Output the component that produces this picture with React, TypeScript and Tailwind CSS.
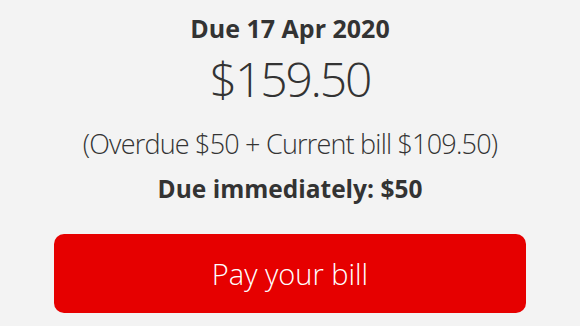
import React from "react";

export default function App() {
  return (
    <div
      className="w-[580px] h-[326px] bg-[#f3f3f3] flex flex-col items-center text-[#333333] overflow-hidden"
      style={{ fontFamily: '"Open Sans", "Liberation Sans", sans-serif' }}
    >
      <div className="mt-[13px] text-[25px] leading-[30px] font-bold tracking-[0px]">Due 17 Apr 2020</div>
      <div className="mt-[10px] text-[48px] leading-[52px] font-light tracking-[-2.2px]">$159.50</div>
      <div className="mt-[22px] text-[27px] leading-[34px] font-light tracking-[-0.8px]">(Overdue $50 + Current bill $109.50)</div>
      <div className="mt-[13px] text-[24.5px] leading-[30px] font-bold tracking-[0px]">Due immediately: $50</div>
      <button className="mt-[30px] w-[472px] h-[79px] rounded-[10px] bg-[#e60000] text-white text-[29px] font-light flex items-center justify-center shrink-0">
        Pay your bill
      </button>
    </div>
  );
}
